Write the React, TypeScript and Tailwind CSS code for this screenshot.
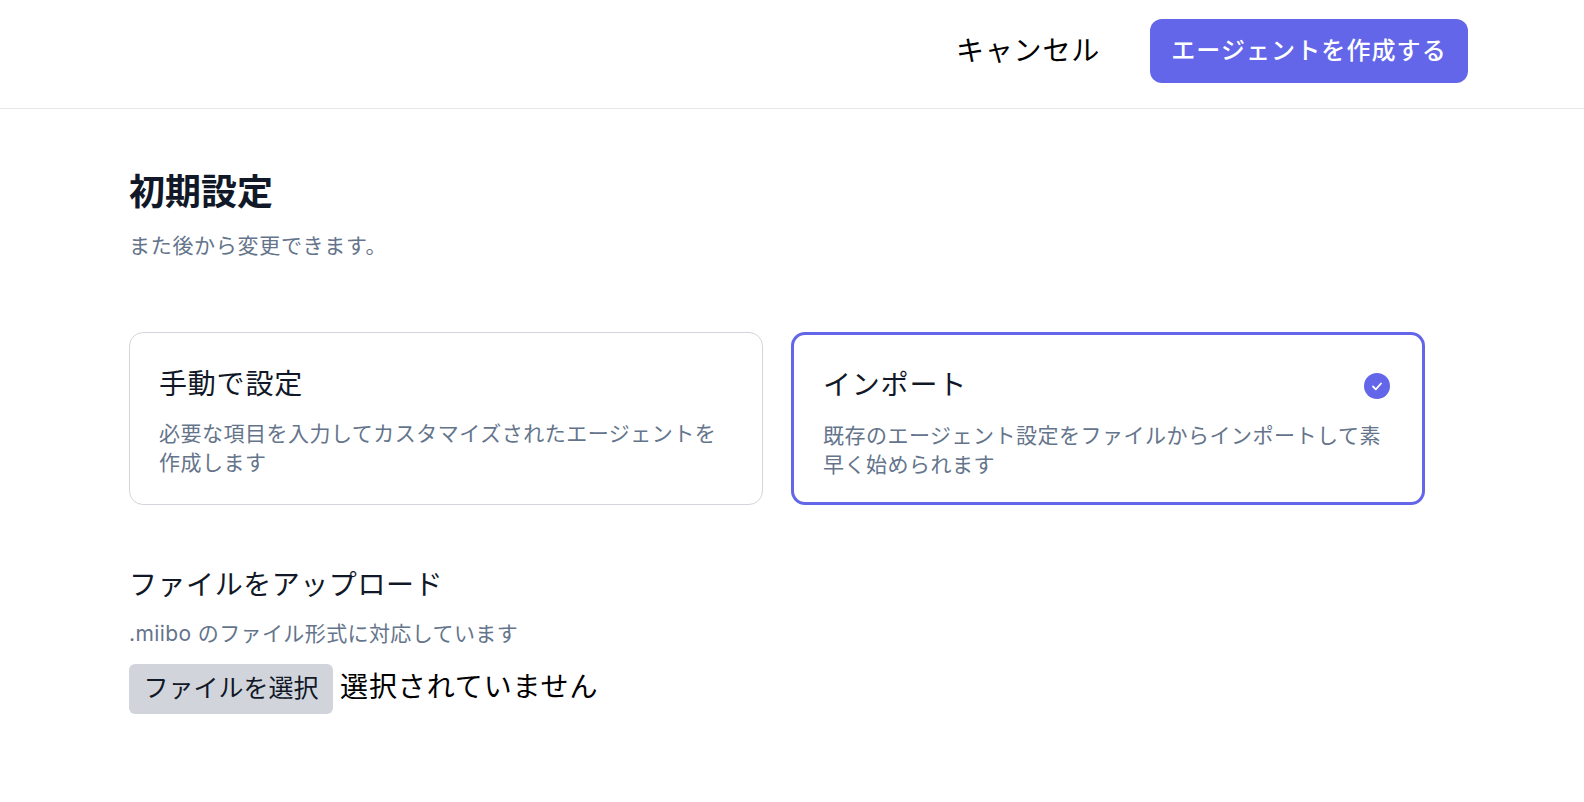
export default function App() {
  return (
    <div className="min-h-screen bg-white text-black font-['Inter','Noto_Sans_CJK_JP',sans-serif]">
      {/* Header */}
      <div className="h-[109px] border-b border-[#e5e7eb] pr-[116px] flex items-start justify-end pt-[19px]">
        <button className="h-[64px] px-[28px] mr-[22px] text-[28px] tracking-[0.8px] leading-[64px] text-black">
          キャンセル
        </button>
        <button className="h-[64px] w-[318px] rounded-[12px] bg-[#6366e9] text-white text-[24px] tracking-[1.1px] font-medium leading-[64px] text-center">
          エージェントを作成する
        </button>
      </div>

      <div className="pl-[129px] pr-[159px]">
        <h1 className="mt-[59px] text-[36px] leading-[48px] font-bold text-[#111827]">初期設定</h1>
        <p className="mt-[14px] text-[21px] tracking-[0.7px] leading-[32px] text-[#64748b]">また後から変更できます。</p>

        <div className="mt-[70px] grid grid-cols-2 gap-[28px]">
          <div className="h-[173px] rounded-[14px] border border-[#d1d5db] pl-[29px] pr-[40px] pt-[31px]">
            <div className="text-[28px] tracking-[0.8px] leading-[40px] text-[#111827]">手動で設定</div>
            <p className="mt-[15px] text-[21px] tracking-[0.5px] leading-[29px] text-[#64748b]">
              必要な項目を入力してカスタマイズされたエージェントを作成します
            </p>
          </div>
          <div className="h-[173px] rounded-[14px] border-[3px] border-[#6366e9] pl-[29px] pr-[30px] pt-[30px]">
            <div className="flex items-center justify-between">
              <div className="text-[28px] tracking-[0.8px] leading-[40px] text-[#111827]">インポート</div>
              <svg width="26" height="26" viewBox="0 0 26 26" className="mt-[2px] mr-[2px]">
                <circle cx="13" cy="13" r="13" fill="#6366e9" />
                <path d="M9 13.5l2.8 2.8L17 10.5" fill="none" stroke="#fff" strokeWidth="1.8" strokeLinecap="round" strokeLinejoin="round" />
              </svg>
            </div>
            <p className="mt-[16px] text-[21px] tracking-[0.5px] leading-[29px] text-[#64748b]">
              既存のエージェント設定をファイルからインポートして素早く始められます
            </p>
          </div>
        </div>

        <div className="mt-[60px] text-[28px] tracking-[0.55px] leading-[40px] text-[#111827]">ファイルをアップロード</div>
        <p className="mt-[13px] text-[21px] tracking-[0.4px] leading-[32px] text-[#64748b]">.miibo のファイル形式に対応しています</p>
        <div className="mt-[14px] flex items-center">
          <button className="h-[50px] w-[204px] rounded-[6px] bg-[#d1d5db] text-[25px] text-[#111827]">ファイルを選択</button>
          <span className="ml-[7px] mb-[4px] text-[28px] tracking-[0.9px] text-black">選択されていません</span>
        </div>
      </div>
    </div>
  );
}
